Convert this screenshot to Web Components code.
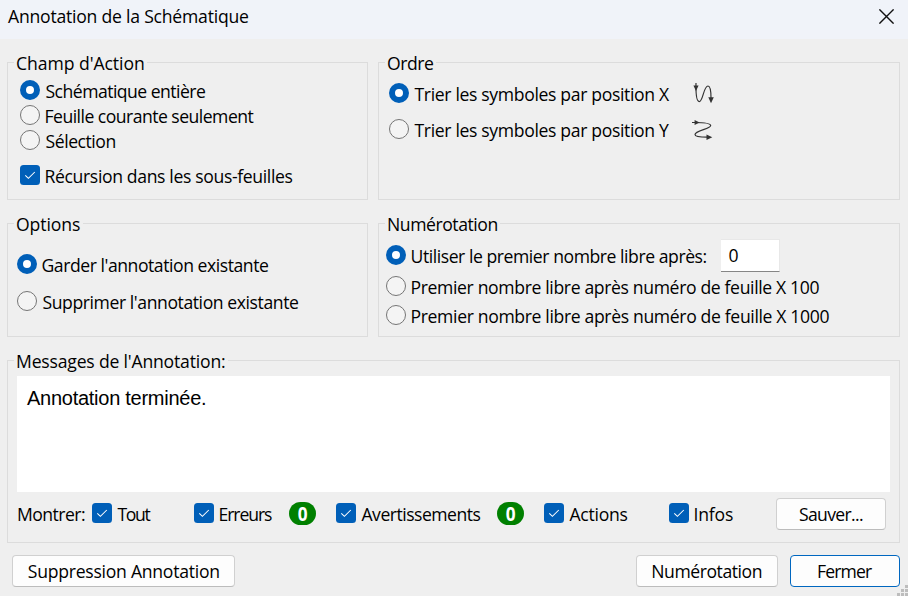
<!DOCTYPE html>
<html lang="fr">
<head>
<meta charset="utf-8">
<title>Annotation de la Schématique</title>
<style>
html, body { margin: 0; width: 908px; height: 596px; overflow: hidden; background: #efefef; }
</style>
</head>
<body>
<annotation-dialog></annotation-dialog>
<script>
const define = (name, html, setup) => {
  const template = document.createElement('template');
  template.innerHTML = html;
  customElements.define(name, class extends HTMLElement {
    connectedCallback() {
      if (this.shadowRoot) return;
      this.attachShadow({ mode: 'open' }).append(template.content.cloneNode(true));
      if (setup) setup(this, this.shadowRoot);
    }
  });
};

/* One line of text whose glyphs span exactly the given width. */
const ctx = document.createElement('canvas').getContext('2d');
define('fit-text', `
<style>
:host { display: block; flex: none; height: 20px; line-height: 20px; white-space: nowrap; padding-top: 1px; box-sizing: border-box; }
span { display: block; }
</style><span><slot></slot></span>`, (el, root) => {
  const w = parseFloat(el.getAttribute('w'));
  const text = el.textContent;
  const cs = getComputedStyle(el);
  ctx.font = `${cs.fontWeight} ${cs.fontSize} ${cs.fontFamily}`;
  const m = ctx.measureText(text);
  const ink = m.actualBoundingBoxRight + m.actualBoundingBoxLeft;
  const span = root.querySelector('span');
  if (text.length > 1) span.style.letterSpacing = (w - ink) / (text.length - 1) + 'px';
  span.style.marginLeft = m.actualBoundingBoxLeft + 'px';
  el.style.width = w + 'px';
});

define('radio-option', `
<style>
:host { display: flex; gap: 5.5px; height: 20px; flex: none; }
i { box-sizing: border-box; flex: none; width: 20px; height: 20px; border-radius: 50%; border: 1px solid #757575; background: #f4f4f4; }
:host([checked]) i { border: 6px solid #005fb8; background: #fff; }
</style><i></i><slot></slot>`);

define('check-option', `
<style>
:host { display: flex; gap: 5.5px; height: 20px; flex: none; }
svg { flex: none; }
</style>
<svg width="20" height="20" viewBox="0 0 20 20"><rect width="20" height="20" rx="3.5" fill="#005fb8"/><path d="M5.3 10.3 8.4 13.3 14.8 7" fill="none" stroke="#fff" stroke-width="1.05"/></svg><slot></slot>`);

define('group-box', `
<style>
:host { display: grid; grid-template-rows: 0 1fr; box-sizing: border-box; border: 1px solid #dcdcdc; min-width: 0; }
.legend { justify-self: start; margin: -11px 0 0 6px; height: 20px; background: #efefef; padding: 0 2.5px 0 3px; }
.body { min-height: 0; min-width: 0; }
</style><div class="legend"><slot name="legend"></slot></div><div class="body"><slot></slot></div>`);

define('push-button', `
<style>
:host { display: flex; justify-content: center; box-sizing: border-box; flex: none; height: 32px; padding-top: 4px; background: #fdfdfd; border: 1px solid #d0d0d0; border-bottom-color: #bcbcbc; border-radius: 4px; }
:host([primary]) { border-color: #0067c0; }
</style><slot></slot>`);

define('count-badge', `
<style>
:host { display: flex; justify-content: center; flex: none; width: 27px; height: 23px; margin-top: -1px; border-radius: 11.5px; background: #008000; color: #fff; font: bold 19.5px/23px "Open Sans", sans-serif; }
span { transform: scaleX(.88); }
</style><span><slot></slot></span>`);

define('number-field', `
<style>
:host { display: block; box-sizing: border-box; flex: none; width: 59px; height: 33px; padding: 4px 0 0 7.5px; background: #fff; border: 1px solid #e8e8e8; border-left-width: 0; border-bottom-color: #868686; }
</style><slot></slot>`);

define('title-bar', `
<style>
:host { display: flex; justify-content: space-between; box-sizing: border-box; height: 39px; padding: 5px 14px 0 8px; background: #f0f3f9; }
svg { margin-top: 4px; }
</style><slot></slot>
<svg width="15" height="15" viewBox="0 0 15 15"><path d="M.4.4 14.6 14.6M14.6.4.4 14.6" stroke="#111" stroke-width="1.4" fill="none"/></svg>`);

define('order-icon', `
<style>:host { display: block; flex: none; width: 22px; height: 22px; } svg { display: block; }
.y, :host([axis="y"]) .x { display: none; } :host([axis="y"]) .y { display: block; }</style>
<svg class="x" width="22" height="22" viewBox="0 0 22 22"><path d="M3 0C2.8 8 3.2 18.3 6.2 18.6C10 18.8 10.5 3 15 3C17.4 3 18 9 18 15" fill="none" stroke="#333" stroke-width="1.2"/><path d="M.4 2.6H5.6L3 8ZM15.3 14.3H20.8L18 20.3Z" fill="#333"/></svg>
<svg class="y" width="22" height="22" viewBox="0 0 22 22"><path d="M0 3.5C7 3.4 18.5 3.5 18.7 6.5C18.9 10 3 11.3 3 15.5C3 17.7 9 18.2 15 18.2" fill="none" stroke="#333" stroke-width="1.2"/><path d="M2.6 .9V6.1L7.6 3.5ZM14.5 15.5V21L20.3 18.2Z" fill="#333"/></svg>`);

define('size-grip', `
<style>:host { display: block; position: absolute; right: 0; bottom: 0; width: 11px; height: 11px; } svg { display: block; }</style>
<svg width="11" height="11" viewBox="0 0 11 11" fill="#bdbdbd"><path d="M8 0h3v3H8zM4 4h3v3H4zM8 4h3v3H8zM0 8h3v3H0zM4 8h3v3H4zM8 8h3v3H8z"/></svg>`);

define('annotation-dialog', `
<style>
:host { display: block; position: relative; width: 908px; height: 596px; background: #efefef; color: #000; font: 17.6px "Open Sans", sans-serif; }
main { display: grid; grid-template-columns: 361px 522px; grid-template-rows: 138px 114px 183px; gap: 23px 10px; padding: 23px 8px 0 7px; }
.wide { grid-column: 1 / -1; }
.col { display: flex; flex-direction: column; }
.row { display: flex; }
.scope { gap: 5px; padding: 17px 0 0 12px; }
.scope check-option { margin-top: 10px; }
.order { gap: 14px; padding: 20px 0 0 10px; }
.order .row { gap: 23px; height: 22px; }
.options { gap: 17px; padding: 30px 0 0 9px; }
.numbers { padding: 15px 0 0 7px; }
.numbers .row { height: 33px; gap: 14.5px; }
.numbers .row radio-option { margin-top: 6px; }
.numbers > radio-option { margin-top: 4px; }
.numbers > radio-option + radio-option { margin-top: 9px; }
.log { box-sizing: border-box; width: 873px; height: 116px; margin: 15px 0 0 9px; padding: 11px 10px; background: #fff; font: 20px "Liberation Sans", Arial, sans-serif; }
.filters { display: grid; grid-template-columns: 74px 102px 95px 47px 161px 47px 125px 107px 110px; padding: 11px 0 0 10px; height: 20px; }
.filters push-button { margin-top: -5px; }
footer { display: flex; padding: 12px 8px 0 12px; }
footer .space { flex: 1; }
</style>
<title-bar><fit-text w="240">Annotation de la Schématique</fit-text></title-bar>
<main>
  <group-box>
    <fit-text slot="legend" w="127">Champ d'Action</fit-text>
    <div class="col scope">
      <radio-option checked><fit-text w="159.5">Schématique entière</fit-text></radio-option>
      <radio-option><fit-text w="208">Feuille courante seulement</fit-text></radio-option>
      <radio-option><fit-text w="70">Sélection</fit-text></radio-option>
      <check-option><fit-text w="247">Récursion dans les sous-feuilles</fit-text></check-option>
    </div>
  </group-box>
  <group-box>
    <fit-text slot="legend" w="45">Ordre</fit-text>
    <div class="col order">
      <div class="row"><radio-option checked><fit-text w="255.5">Trier les symboles par position X</fit-text></radio-option><order-icon></order-icon></div>
      <div class="row"><radio-option><fit-text w="254.5">Trier les symboles par position Y</fit-text></radio-option><order-icon axis="y"></order-icon></div>
    </div>
  </group-box>
  <group-box>
    <fit-text slot="legend" w="63">Options</fit-text>
    <div class="col options">
      <radio-option checked><fit-text w="225.5">Garder l'annotation existante</fit-text></radio-option>
      <radio-option><fit-text w="255.5">Supprimer l'annotation existante</fit-text></radio-option>
    </div>
  </group-box>
  <group-box>
    <fit-text slot="legend" w="109.5">Numérotation</fit-text>
    <div class="col numbers">
      <div class="row"><radio-option checked><fit-text w="295">Utiliser le premier nombre libre après:</fit-text></radio-option><number-field><fit-text w="9">0</fit-text></number-field></div>
      <radio-option><fit-text w="408">Premier nombre libre après numéro de feuille X 100</fit-text></radio-option>
      <radio-option><fit-text w="418">Premier nombre libre après numéro de feuille X 1000</fit-text></radio-option>
    </div>
  </group-box>
  <group-box class="wide">
    <fit-text slot="legend" w="208">Messages de l'Annotation:</fit-text>
    <div class="log"><fit-text w="178">Annotation terminée.</fit-text></div>
    <div class="filters">
      <fit-text w="67">Montrer:</fit-text>
      <check-option><fit-text w="33">Tout</fit-text></check-option>
      <check-option><fit-text w="52.5">Erreurs</fit-text></check-option>
      <count-badge>0</count-badge>
      <check-option><fit-text w="119">Avertissements</fit-text></check-option>
      <count-badge>0</count-badge>
      <check-option><fit-text w="58">Actions</fit-text></check-option>
      <check-option><fit-text w="38.5">Infos</fit-text></check-option>
      <push-button><fit-text w="64">Sauver...</fit-text></push-button>
    </div>
  </group-box>
</main>
<footer>
  <push-button style="width:223px"><fit-text w="191.5">Suppression Annotation</fit-text></push-button>
  <span class="space"></span>
  <push-button style="width:142px"><fit-text w="109.5">Numérotation</fit-text></push-button>
  <push-button primary style="width:110px;margin-left:12px"><fit-text w="54">Fermer</fit-text></push-button>
</footer>
<size-grip></size-grip>`);
</script>
</body>
</html>
